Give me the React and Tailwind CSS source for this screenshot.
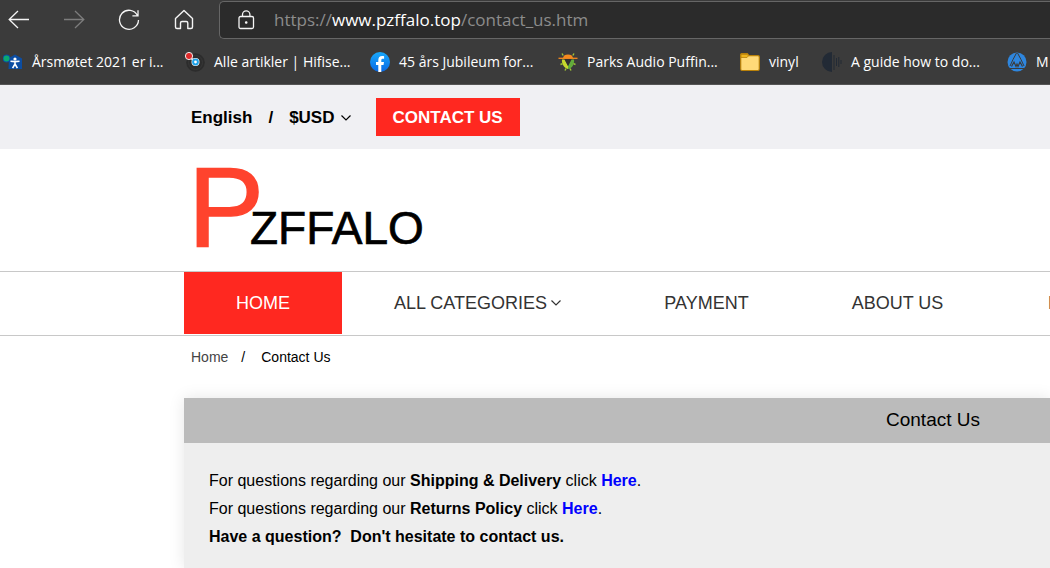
const bookmarks = [
  { label: 'Årsmøtet 2021 er i...', Icon: MeetingIcon, width: 'w-[182px]' },
  { label: 'Alle artikler | Hifise...', Icon: HifiIcon, width: 'w-[185px]' },
  { label: '45 års Jubileum for...', Icon: FacebookIcon, width: 'w-[188px]' },
  { label: 'Parks Audio Puffin...', Icon: ParksIcon, width: 'w-[182px]' },
  { label: 'vinyl', Icon: FolderIcon, width: 'w-[82px]' },
  { label: 'A guide how to do...', Icon: AudioIcon, width: 'w-[185px]' },
  { label: 'M', Icon: MountainIcon, width: 'w-[43px]' },
];

const menu = [
  { label: 'HOME', active: true, width: 'w-[158px]' },
  { label: 'ALL CATEGORIES', dropdown: true, width: 'w-[271px]' },
  { label: 'PAYMENT', width: 'w-[187px]' },
  { label: 'ABOUT US', width: 'w-[195px]' },
  { label: 'FAQ', width: 'w-[142px]' },
];

function MeetingIcon() {
  return (
    <svg viewBox="0 0 20 20" className="w-5 h-5">
      <path d="M6 6l6-3.500L19 6.500V17H5.500z" fill="#0c4da2" />
      <circle cx="3.500" cy="6.500" r="4" fill="#0c4da2" />
      <circle cx="3.500" cy="6.500" r="3" fill="#0aa972" />
      <circle cx="12" cy="7" r="1.600" fill="#fff" />
      <path d="M7.500 9.200l4.500.4 4.500-.4M12 9.500v3.300M12 12l-2.400 4.200M12 12l2.400 4.200" stroke="#fff" strokeWidth="1.600" fill="none" />
    </svg>
  );
}

function HifiIcon() {
  return (
    <svg viewBox="0 0 20 20" className="w-5 h-5">
      <circle cx="10.500" cy="10.500" r="9.300" fill="#2c2c2c" />
      <circle cx="10.500" cy="10.500" r="7" fill="none" stroke="#373737" />
      <path d="M5 5l5 5" stroke="#ddd" strokeWidth="2" />
      <circle cx="4" cy="4" r="3.600" fill="#e12a2a" stroke="#eee" strokeWidth="1" />
      <circle cx="10.500" cy="10" r="4" fill="#fff" />
      <circle cx="10.500" cy="10" r="2.400" fill="#fff" stroke="#1da1e8" strokeWidth="2" />
    </svg>
  );
}

function FacebookIcon() {
  return (
    <svg viewBox="0 0 20 20" className="w-5 h-5">
      <defs>
        <linearGradient id="fb" x1="0" y1="0" x2="0" y2="1">
          <stop offset="0" stopColor="#19a9fb" />
          <stop offset="1" stopColor="#0868e5" />
        </linearGradient>
      </defs>
      <circle cx="10" cy="10" r="10" fill="url(#fb)" />
      <path d="M8.300 20v-7H6v-3h2.300V8.200C8.300 5.600 9.600 4 12.100 4c.8 0 1.600.1 2 .2v2.500h-1.300c-1.200 0-1.500.6-1.500 1.500V10H14l-.5 3h-2.200v7z" fill="#fff" />
    </svg>
  );
}

function ParksIcon() {
  return (
    <svg viewBox="0 0 20 20" className="w-5 h-5">
      <path d="M5 6c.5-2.500 2-3.500 5-3.500s4.500 1 5 3.500z" fill="#f58a1f" />
      <path d="M4 7.500h2.500L10 14v3C6 16 3.500 12 4 7.500z" fill="#c7d92d" />
      <path d="M16 7.500h-2.500L10 14v3c4-.5 6.500-4.500 6-9.500z" fill="#62ad3b" />
      <path d="M6.500 7h7L10 14z" fill="#303030" />
      <path d="M.5 6.300h19" stroke="#f58a1f" strokeWidth="1.300" />
      <path d="M4 1.500l1.200 2M16 1.500l-1.200 2M2.500 12.500l2-.8M17.500 12.500l-2-.8M7 18.500l1-2M13 18.500l-1-2" stroke="#a1c934" strokeWidth="1.400" />
    </svg>
  );
}

function FolderIcon() {
  return (
    <svg viewBox="0 0 20 20" className="w-5 h-5">
      <path d="M.7 2.700q0-1 1-1h5.600l1.700 2h9q1.300 0 1.300 1.300v12q0 1.500-1.500 1.500H2.200Q.7 18.500.7 17z" fill="#ffda78" stroke="#b98109" strokeWidth="1.200" />
      <path d="M1 2.500h6l1.500 1.300L7 5.500H1z" fill="#eeb51e" stroke="#b98109" strokeWidth=".8" />
    </svg>
  );
}

function AudioIcon() {
  return (
    <svg viewBox="0 0 20 20" className="w-5 h-5">
      <path d="M10 0v20A10 10 0 0 1 10 0z" fill="#222a35" />
      <path d="M12 3v15M14.500 6v8M16.800 5v10M19 8v4" stroke="#222a35" strokeWidth="1" />
    </svg>
  );
}

function MountainIcon() {
  return (
    <svg viewBox="0 0 20 20" className="w-5 h-5">
      <circle cx="10" cy="10" r="9.500" fill="#2e86de" />
      <path d="M9.500 1L6 7.500 3 14M10.500 1L14 7.500l3 6.500" stroke="#3b3b3b" strokeWidth="1" fill="none" />
      <path d="M4.500 14.500L7 10l2 4.500 1-2.500 1 2.500 2-4.500 2.500 4.500" stroke="#3b3b3b" strokeWidth="1.200" fill="none" />
      <path d="M3 16.500h14" stroke="#3b3b3b" strokeWidth="1" />
    </svg>
  );
}

function Chevron() {
  return (
    <svg viewBox="0 0 10 6" className="w-2.5 h-1.5 overflow-visible" fill="none" stroke="currentColor" strokeWidth="1.200">
      <path d="M.5.5L5 5 9.500.5" />
    </svg>
  );
}

function BrowserBar() {
  return (
    <header className="bg-[#3b3b3b] border-b border-[#555555] text-white font-['Open_Sans','Noto_Sans',sans-serif] overflow-hidden">
      <div className="flex items-center pt-px">
        <div className="flex items-center w-[219px] shrink-0 gap-[33px] pl-2">
          <button aria-label="Back">
            <svg viewBox="0 0 22 22" className="w-[22px] h-[22px]" fill="none" stroke="#f5f5f5" strokeWidth="1.300">
              <path d="M21 10.500H1.500M10 2L1.200 10.500 10 19" />
            </svg>
          </button>
          <button aria-label="Forward">
            <svg viewBox="0 0 22 22" className="w-[22px] h-[22px]" fill="none" stroke="#7d7d7d" strokeWidth="1.300">
              <path d="M1 10.500h19.500M12 2l8.800 8.500L12 19" />
            </svg>
          </button>
          <button aria-label="Reload">
            <svg viewBox="0 0 22 22" className="w-[22px] h-[22px]" fill="none" stroke="#f5f5f5" strokeWidth="1.300">
              <path d="M19.500 6.500A9.500 9.500 0 1 0 20.500 11M20 1.200v5.600h-5.600" />
            </svg>
          </button>
          <button aria-label="Start page">
            <svg viewBox="0 0 22 22" className="w-[22px] h-[22px]" fill="none" stroke="#f5f5f5" strokeWidth="1.400" strokeLinejoin="round">
              <path d="M2.500 9.500L11 1.500l8.500 8v8.500q0 1.500-1.500 1.500h-3.200V14q0-1.500-1.500-1.500H9q-1.500 0-1.500 1.500v5.500H4q-1.500 0-1.500-1.500z" />
            </svg>
          </button>
        </div>
        <div className="flex items-center flex-1 h-[38px] bg-[#2b2b2b] border border-r-0 border-[#666666] rounded-l-[5px] pl-4">
          <svg viewBox="0 0 20 20" className="w-5 h-5 mr-[18px]" fill="none" stroke="#f5f5f5" strokeWidth="1.300">
            <rect x="3" y="6.500" width="14.500" height="12" rx="1.500" />
            <path d="M6.500 6.500V4.500a3.700 3.700 0 0 1 7.400 0v2" />
            <circle cx="10.200" cy="12.500" r=".7" fill="#f5f5f5" />
          </svg>
          <span className="text-[17px] leading-6 text-[#8c8c8c] whitespace-nowrap">
            https://<span className="text-white">www.pzffalo.top</span>/contact_us.htm
          </span>
        </div>
      </div>
      <nav aria-label="Bookmarks" className="flex items-center h-[45px] pl-[3px]">
        {bookmarks.map(({ label, Icon, width }) => (
          <a key={label} href="#" className={`flex items-center shrink-0 gap-[9px] text-[14px] leading-5 whitespace-nowrap ${width}`}>
            <Icon />
            <span>{label}</span>
          </a>
        ))}
      </nav>
    </header>
  );
}

function Logo() {
  return (
    <svg viewBox="0 0 240 90" className="w-[240px] h-[90px] overflow-visible" role="img" aria-label="Pzffalo">
      <text x="-3" y="84" fontSize="114" fill="#ff432d" stroke="#ff432d" strokeWidth="1.500" fontFamily="Liberation Sans, Arial, sans-serif">P</text>
      <text x="59" y="82" fontSize="46" fill="#000" stroke="#000" strokeWidth=".7" fontFamily="Liberation Sans, Arial, sans-serif">ZFFALO</text>
    </svg>
  );
}

export default function App() {
  return (
    <div className="min-h-screen flex flex-col bg-white text-black overflow-hidden font-['Liberation_Sans',Arial,sans-serif]">
      <BrowserBar />

      {/* Language and currency */}
      <div className="flex items-center h-16 bg-[#f0f0f3] pl-[191px] text-[17px] leading-6 font-bold">
        <button className="pt-0.5">English</button>
        <span className="mx-4 pt-0.5">/</span>
        <button className="flex items-center gap-[6px] pt-0.5">
          $USD
          <Chevron />
        </button>
        <a href="#" className="ml-[25px] h-[38px] px-[17px] pt-0.5 flex items-center bg-[#ff2820] text-white">
          CONTACT US
        </a>
      </div>

      {/* Logo */}
      <div className="h-[122px] pl-[191px] pt-[13px]">
        <a href="#" className="inline-block">
          <Logo />
        </a>
      </div>

      {/* Main menu */}
      <nav className="flex border-y border-[#c8c8c8] pl-[184px] pb-px text-[18px] leading-6">
        {menu.map((item) => (
          <a
            key={item.label}
            href="#"
            className={`h-[62px] flex items-center justify-center shrink-0 gap-1 ${item.width} ${
              item.active ? 'bg-[#ff2820] text-white' : 'text-[#333333]'
            }`}
          >
            {item.label}
            {item.dropdown && <Chevron />}
          </a>
        ))}
      </nav>

      {/* Breadcrumb */}
      <div className="flex items-center h-[42px] pl-[191px] text-[14px] leading-5">
        <a href="#" className="text-[#444444]">Home</a>
        <span className="ml-[13px] mr-4">/</span>
        <span>Contact Us</span>
      </div>

      {/* Contact panel */}
      <main className="flex-1 mt-5 ml-[184px] bg-[#eeeeee] shadow-[0_0_15px_rgba(0,0,0,0.1)]">
        <h1 className="h-[45px] pr-[70px] bg-[#bbbbbb] text-right text-[19px] leading-[43px]">
          Contact Us
        </h1>
        <div className="pt-6 pl-[25px] text-[16px] leading-7">
          <p>
            For questions regarding our <b>Shipping &amp; Delivery</b> click{' '}
            <a href="#" className="font-bold text-[#0000ff]">Here</a>.
          </p>
          <p>
            For questions regarding our <b>Returns Policy</b> click{' '}
            <a href="#" className="font-bold text-[#0000ff]">Here</a>.
          </p>
          <p className="font-bold">Have a question?&nbsp; Don't hesitate to contact us.</p>
        </div>
      </main>
    </div>
  );
}
